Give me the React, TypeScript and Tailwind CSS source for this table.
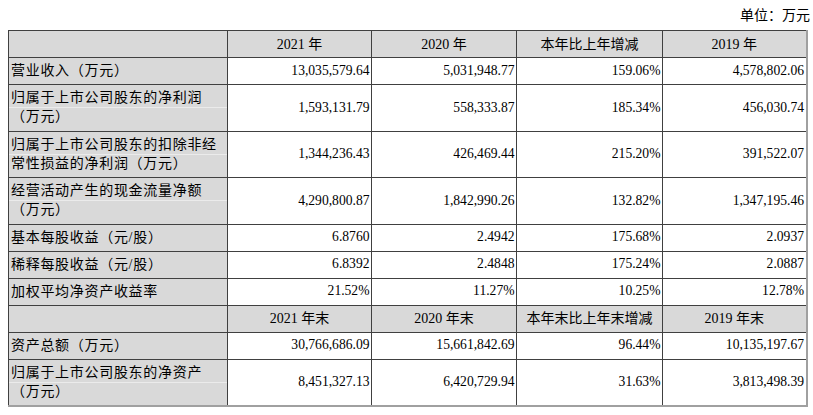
const serif = "font-['Liberation_Serif','Noto_Sans_CJK_SC',serif]";

type Row = { label: string[]; values: string[]; tall?: boolean };

const flowRows: Row[] = [
  { label: ["营业收入（万元）"], values: ["13,035,579.64", "5,031,948.77", "159.06%", "4,578,802.06"] },
  { label: ["归属于上市公司股东的净利润", "（万元）"], values: ["1,593,131.79", "558,333.87", "185.34%", "456,030.74"], tall: true },
  { label: ["归属于上市公司股东的扣除非经", "常性损益的净利润（万元）"], values: ["1,344,236.43", "426,469.44", "215.20%", "391,522.07"], tall: true },
  { label: ["经营活动产生的现金流量净额", "（万元）"], values: ["4,290,800.87", "1,842,990.26", "132.82%", "1,347,195.46"], tall: true },
  { label: ["基本每股收益（元/股）"], values: ["6.8760", "2.4942", "175.68%", "2.0937"] },
  { label: ["稀释每股收益（元/股）"], values: ["6.8392", "2.4848", "175.24%", "2.0887"] },
  { label: ["加权平均净资产收益率"], values: ["21.52%", "11.27%", "10.25%", "12.78%"] },
];

const stockRows: Row[] = [
  { label: ["资产总额（万元）"], values: ["30,766,686.09", "15,661,842.69", "96.44%", "10,135,197.67"] },
  { label: ["归属于上市公司股东的净资产", "（万元）"], values: ["8,451,327.13", "6,420,729.94", "31.63%", "3,813,498.39"], tall: true },
];

const cell = "border border-[#404040] p-0";

function HeaderRow({ cols }: { cols: string[] }) {
  return (
    <tr className="h-[27px] bg-[#d9d9d9]">
      <td className={cell}></td>
      {cols.map((c) => (
        <td key={c} className={`${cell} text-center text-[14px] text-black`}>
          {c}
        </td>
      ))}
    </tr>
  );
}

function DataRow({ row }: { row: Row }) {
  return (
    <tr className={row.tall ? "h-[46.5px]" : "h-[27px]"}>
      <td className={`${cell} bg-[#d9d9d9] text-[14px] tracking-[0.7px] text-black align-middle`}>
        {row.label.map((l, i) => (
          <div key={i}>
            {i > 0 && <div className="h-px bg-[#ebebeb]" />}
            <div className="pl-[2px] leading-[18px] whitespace-nowrap">{l}</div>
          </div>
        ))}
      </td>
      {row.values.map((v, i) => (
        <td key={i} className={`${cell} bg-white text-right pr-[1.5px] text-[13.6px] text-black`}>
          {v}
        </td>
      ))}
    </tr>
  );
}

export default function App() {
  return (
    <div className={`w-[813px] h-[415px] bg-white ${serif}`}>
      <div className="h-[30px] flex items-center justify-end pr-[3px] text-[14px] text-black">
        单位：万元
      </div>
      <table className="ml-[8px] table-fixed border-collapse w-[798px] border-r-2 border-b-2 border-r-[#a0a0a0] border-b-[#a0a0a0]">
        <colgroup>
          <col className="w-[219px]" />
          <col className="w-[144px]" />
          <col className="w-[145px]" />
          <col className="w-[146px]" />
          <col className="w-[144px]" />
        </colgroup>
        <tbody>
          <HeaderRow cols={["2021 年", "2020 年", "本年比上年增减", "2019 年"]} />
          {flowRows.map((r) => (
            <DataRow key={r.label.join("")} row={r} />
          ))}
          <HeaderRow cols={["2021 年末", "2020 年末", "本年末比上年末增减", "2019 年末"]} />
          {stockRows.map((r) => (
            <DataRow key={r.label.join("")} row={r} />
          ))}
        </tbody>
      </table>
    </div>
  );
}
